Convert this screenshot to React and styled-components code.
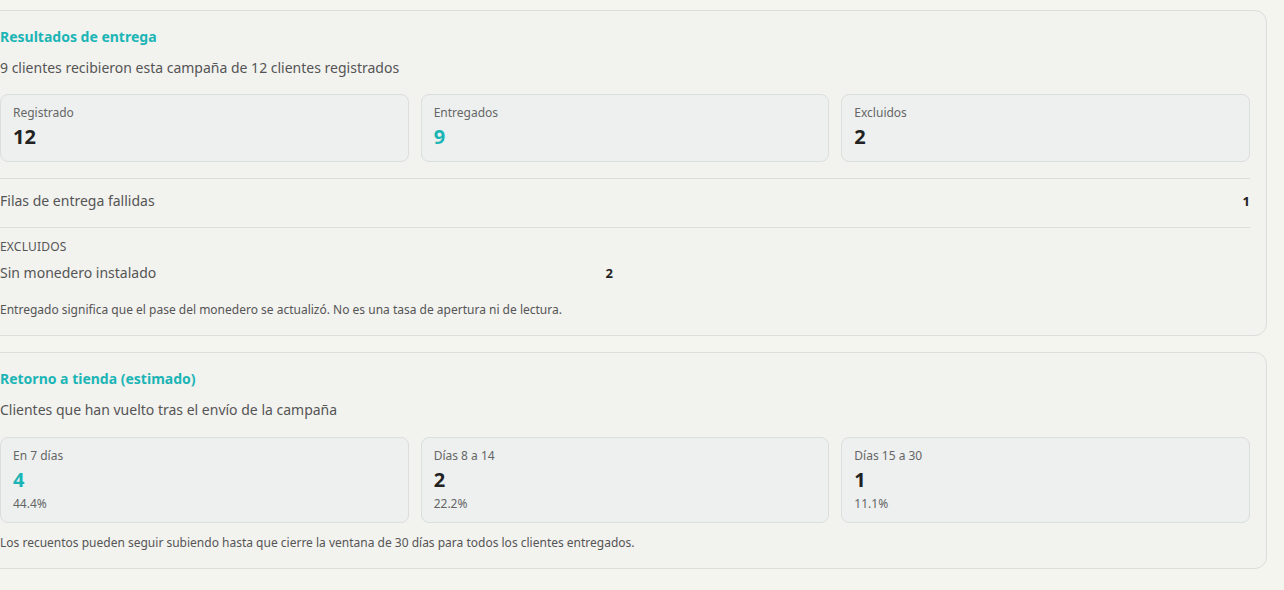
import React from "react";
import styled, { createGlobalStyle } from "styled-components";

const GlobalStyle = createGlobalStyle`
  html, body {
    margin: 0;
    padding: 0;
    background: #f5f5f0;
    font-family: "Noto Sans", "Open Sans", sans-serif;
    color: #222;
    overflow: hidden;
  }
`;

const Page = styled.div`
  margin-left: -17px;
  padding: 10px 17px 20px 0;
  display: flex;
  flex-direction: column;
  gap: 16px;
`;

const Card = styled.section`
  background: #f2f2ef;
  border: 1px solid #dcdedb;
  border-radius: 12px;
  padding: 16px 16px 17px;
  display: flex;
  flex-direction: column;
`;

const Title = styled.h2`
  margin: 0;
  font-size: 14px;
  line-height: 20px;
  font-weight: 700;
  color: #1bb5b5;
`;

const Subtitle = styled.p`
  margin: 11px 0 0;
  font-size: 14px;
  line-height: 20px;
  color: #555;
`;

const StatGrid = styled.div`
  margin-top: ${(p) => p.$gap || 16}px;
  display: grid;
  grid-template-columns: repeat(3, 1fr);
  gap: 12px;
`;

const Stat = styled.div`
  background: #edf0ef;
  border: 1px solid #dadedc;
  border-radius: 8px;
  padding: 10px 12px 10px;
  display: flex;
  flex-direction: column;
`;

const StatLabel = styled.div`
  font-size: 12px;
  line-height: 16px;
  color: #666;
`;

const StatValue = styled.div`
  margin-top: 2px;
  font-size: 20px;
  line-height: 28px;
  font-weight: 700;
  color: ${(p) => (p.$accent ? "#1bb5b5" : "#222")};
`;

const StatPct = styled.div`
  margin-top: 2px;
  font-size: 12px;
  line-height: 16px;
  color: #666;
`;

const FailedRow = styled.div`
  margin-top: 16px;
  border-top: 1px solid #dcdedb;
  border-bottom: 1px solid #dcdedb;
  padding: 12px 0 16px;
  display: flex;
  justify-content: space-between;
  align-items: center;
  font-size: 14px;
  line-height: 20px;
  color: #555;
`;

const Num = styled.span`
  font-size: 13px;
  font-weight: 700;
  color: #222;
`;

const Excluded = styled.div`
  padding-top: 11px;
  display: flex;
  flex-direction: column;
`;

const SectionLabel = styled.div`
  font-size: 12px;
  line-height: 16px;
  letter-spacing: 0.2px;
  text-transform: uppercase;
  color: #555;
`;

const ReasonGrid = styled.div`
  margin-top: 8px;
  display: grid;
  grid-template-columns: 1fr 1fr;
  gap: 24px;
`;

const Reason = styled.div`
  display: flex;
  justify-content: space-between;
  align-items: center;
  font-size: 14px;
  line-height: 20px;
  color: #555;
`;

const Note = styled.p`
  margin: ${(p) => p.$gap}px 0 0;
  font-size: 12px;
  line-height: 16px;
  color: #555;
`;

const delivery = [
  { label: "Registrado", value: 12 },
  { label: "Entregados", value: 9, accent: true },
  { label: "Excluidos", value: 2 },
];

const returns = [
  { label: "En 7 días", value: 4, pct: "44.4%", accent: true },
  { label: "Días 8 a 14", value: 2, pct: "22.2%" },
  { label: "Días 15 a 30", value: 1, pct: "11.1%" },
];

export default function App() {
  return (
    <>
      <GlobalStyle />
      <Page>
        <Card>
          <Title>Resultados de entrega</Title>
          <Subtitle>9 clientes recibieron esta campaña de 12 clientes registrados</Subtitle>
          <StatGrid>
            {delivery.map((s) => (
              <Stat key={s.label}>
                <StatLabel>{s.label}</StatLabel>
                <StatValue $accent={s.accent}>{s.value}</StatValue>
              </Stat>
            ))}
          </StatGrid>
          <FailedRow>
            <span>Filas de entrega fallidas</span>
            <Num>1</Num>
          </FailedRow>
          <Excluded>
            <SectionLabel>Excluidos</SectionLabel>
            <ReasonGrid>
              <Reason>
                <span>Sin monedero instalado</span>
                <Num>2</Num>
              </Reason>
            </ReasonGrid>
          </Excluded>
          <Note $gap={19}>
            Entregado significa que el pase del monedero se actualizó. No es una tasa de apertura ni de lectura.
          </Note>
        </Card>
        <Card>
          <Title>Retorno a tienda (estimado)</Title>
          <Subtitle>Clientes que han vuelto tras el envío de la campaña</Subtitle>
          <StatGrid $gap={17}>
            {returns.map((s) => (
              <Stat key={s.label}>
                <StatLabel>{s.label}</StatLabel>
                <StatValue $accent={s.accent}>{s.value}</StatValue>
                <StatPct>{s.pct}</StatPct>
              </Stat>
            ))}
          </StatGrid>
          <Note $gap={12}>
            Los recuentos pueden seguir subiendo hasta que cierre la ventana de 30 días para todos los clientes entregados.
          </Note>
        </Card>
      </Page>
    </>
  );
}
